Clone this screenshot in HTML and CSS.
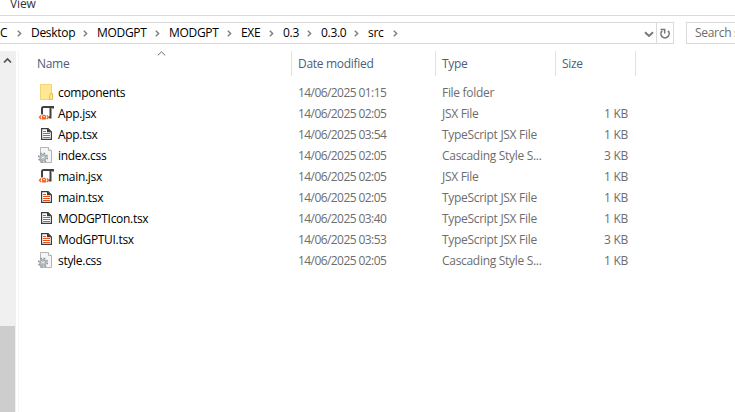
FILE: index.html
```html
<!DOCTYPE html>
<html lang="en">
<head>
<meta charset="utf-8">
<title>src</title>
<link rel="stylesheet" href="styles.css">
</head>
<body>
<svg class="defs" aria-hidden="true">
  <symbol id="chev" viewBox="0 0 5 7"><path d="M.8 .8 3.6 3.5 .8 6.2" fill="none" stroke="#808080" stroke-width="1.5"/></symbol>
  <symbol id="folder" viewBox="0 0 16 16"><path d="M2 0H13.5V9H15V15.5H2Z" fill="#ffe794"/><path d="M2.5 .5H13.5V15.5H2.5Z" fill="#ffe794" stroke="#f2d574"/><path d="M12.5 9.5H14.5V15.5H11.5V13Z" fill="#ffe898" stroke="#e8c04d"/></symbol>
  <symbol id="jsx" viewBox="0 0 16 16"><path d="M4 10V3.5Q4 2 5.5 2H15V3.5" fill="none" stroke="#414141" stroke-width="2"/><path d="M12.5 2V12.5H10.8" fill="none" stroke="#414141" stroke-width="2"/><path d="M0 9.4H10.6V15H0Z" fill="#fff"/><path d="M3.2 10.4 1.5 12.2 3.2 14M8.8 10.4 10.5 12.2 8.8 14" fill="none" stroke="#f26522" stroke-width="1.4"/><path d="M4 11 5 9.8H7L8 11V14.5H4Z" fill="#f26522"/><path d="M5.2 11.6H6.8" stroke="#fff"/></symbol>
  <symbol id="tsx" viewBox="0 0 16 16"><path d="M3.6 2.6H10.1L13.4 5.9V13.4H3.6Z" fill="#fff" stroke="#3c3c3c" stroke-width="1.2"/><path d="M9 2V6.2H13.8Z" fill="#3c3c3c"/><path d="M5 5.5H8M5 7.5H12M5 9.5H12M5 11.5H12" stroke="#e8531c" stroke-width="1"/></symbol>
  <symbol id="css" viewBox="0 0 16 16"><path d="M2.5 .5H10.5L13.5 3.5V15.5H2.5Z" fill="#f5f5f5" stroke="#b5b5b5"/><path d="M10.5 .5V3.5H13.5" fill="#fff" stroke="#b5b5b5"/><circle cx="5" cy="10.5" r="4.3" fill="none" stroke="#8f979b" stroke-width="1.7" stroke-dasharray="1.7 1.68"/><circle cx="5" cy="10.5" r="2.9" fill="#e5e8e9" stroke="#a9b0b3" stroke-width="1.6"/><circle cx="5" cy="10.5" r="1.3" fill="#fff" stroke="#8a9296" stroke-width=".6"/></symbol>
</svg>
<div class="ribbon"><span>View</span></div>
<div class="toolbar">
  <div class="address">
    <div class="crumbs">
      <span class="crumb">C<svg><use href="#chev"/></svg></span>
      <span class="crumb">Desktop<svg><use href="#chev"/></svg></span>
      <span class="crumb">MODGPT<svg><use href="#chev"/></svg></span>
      <span class="crumb">MODGPT<svg><use href="#chev"/></svg></span>
      <span class="crumb">EXE<svg><use href="#chev"/></svg></span>
      <span class="crumb">0.3<svg><use href="#chev"/></svg></span>
      <span class="crumb">0.3.0<svg><use href="#chev"/></svg></span>
      <span class="crumb">src<svg><use href="#chev"/></svg></span>
    </div>
    <svg class="drop" viewBox="0 0 10 7"><path d="M1 1.2 5 5 9 1.2" fill="none" stroke="#777" stroke-width="1.9"/></svg>
    <div class="refresh"><svg viewBox="0 0 12 12"><path d="M3.2 2.8A4.1 4.1 0 1 0 9 2.9" fill="none" stroke="#777" stroke-width="1.6"/><path d="M1.5 1.4H5.7V5.4" fill="none" stroke="#777" stroke-width="1.5"/></svg></div>
  </div>
  <div class="search">Search src</div>
</div>
<div class="main">
  <div class="scroll">
    <svg viewBox="0 0 9 7"><path d="M1 5.5 4.5 2 8 5.5" fill="none" stroke="#505050" stroke-width="1.7"/></svg>
    <div class="thumb"></div>
  </div>
  <div class="list">
    <div class="row head">
      <span class="h-name">Name<svg class="sort" viewBox="0 0 9 5"><path d="M.8 4.4 4.5 .8 8.2 4.4" fill="none" stroke="#666" stroke-width="1"/></svg></span><span>Date modified</span><span>Type</span><span>Size</span>
    </div>
    <div class="row"><span class="name"><svg><use href="#folder"/></svg>components</span><span class="date">14/06/2025 01:15</span><span class="type">File folder</span><span class="size"></span></div>
    <div class="row"><span class="name"><svg><use href="#jsx"/></svg>App.jsx</span><span class="date">14/06/2025 02:05</span><span class="type">JSX File</span><span class="size">1 KB</span></div>
    <div class="row"><span class="name"><svg><use href="#tsx"/></svg>App.tsx</span><span class="date">14/06/2025 03:54</span><span class="type">TypeScript JSX File</span><span class="size">1 KB</span></div>
    <div class="row"><span class="name"><svg><use href="#css"/></svg>index.css</span><span class="date">14/06/2025 02:05</span><span class="type">Cascading Style S...</span><span class="size">3 KB</span></div>
    <div class="row"><span class="name"><svg><use href="#jsx"/></svg>main.jsx</span><span class="date">14/06/2025 02:05</span><span class="type">JSX File</span><span class="size">1 KB</span></div>
    <div class="row"><span class="name"><svg><use href="#tsx"/></svg>main.tsx</span><span class="date">14/06/2025 02:05</span><span class="type">TypeScript JSX File</span><span class="size">1 KB</span></div>
    <div class="row"><span class="name"><svg><use href="#tsx"/></svg>MODGPTIcon.tsx</span><span class="date">14/06/2025 03:40</span><span class="type">TypeScript JSX File</span><span class="size">1 KB</span></div>
    <div class="row"><span class="name"><svg><use href="#tsx"/></svg>ModGPTUI.tsx</span><span class="date">14/06/2025 03:53</span><span class="type">TypeScript JSX File</span><span class="size">3 KB</span></div>
    <div class="row"><span class="name"><svg><use href="#css"/></svg>style.css</span><span class="date">14/06/2025 02:05</span><span class="type">Cascading Style S...</span><span class="size">1 KB</span></div>
  </div>
</div>
</body>
</html>
```
FILE: styles.css
```css
* { box-sizing: border-box; }
body {
  margin: 0;
  width: 735px;
  height: 412px;
  overflow: hidden;
  background: #fff;
  color: #000;
  font: 12px/16px "Open Sans", "Noto Sans", sans-serif;
  letter-spacing: -.3px;
  white-space: nowrap;
  display: flex;
  flex-direction: column;
}
.defs { display: none; }
svg { flex: none; display: block; }
.ribbon {
  height: 16px;
  border-bottom: 1px solid #dadbdc;
  padding-left: 10px;
  color: #333;
  line-height: 15px;
  display: flex;
  align-items: center;
}
.ribbon span { margin-top: -8px; letter-spacing: -.1px; }
.toolbar { display: flex; gap: 12px; padding-top: 6px; }
.address {
  flex: none;
  width: 674px;
  height: 22px;
  border: 1px solid #d9d9d9;
  border-left: 0;
  display: flex;
  align-items: center;
}
.crumbs {
  flex: 1;
  display: grid;
  grid-template-columns: 31px 66px 72px 72px 42px 38px 47px 39px;
}
.crumb { display: flex; align-items: center; justify-content: space-between; padding-right: 9px; }
.crumb svg { width: 5px; height: 7px; margin-top: 1px; }
.drop { width: 10px; height: 7px; margin: 2px 2px 0 0; }
.refresh {
  width: 17px;
  height: 20px;
  border-left: 1px solid #d9d9d9;
  display: flex;
  align-items: center;
  justify-content: center;
}
.refresh svg { width: 12px; height: 12px; margin-top: 1px; }
.search {
  flex: none;
  width: 60px;
  height: 22px;
  border: 1px solid #d9d9d9;
  padding-left: 8px;
  line-height: 20px;
  color: #6d6d6d;
}
.main { flex: 1; display: flex; margin-top: 7px; }
.scroll {
  width: 16px;
  background: #f0f0f0;
  display: flex;
  flex-direction: column;
  justify-content: space-between;
}
.scroll svg { width: 9px; height: 7px; margin: 6px 0 0 3px; }
.thumb { width: 15px; height: 86px; background: #cdcdcd; }
.list { flex: 1; margin-left: 2px; border-left: 1px solid #f4f4f4; }
.row {
  display: grid;
  grid-template-columns: 273px 144px 120px 80px;
  height: 21px;
  padding-top: 3px;
  align-items: start;
  color: #6d6d6d;
}
.head { height: 25px; padding-top: 0; margin-bottom: 6px; color: #4c607a; }
.head span {
  height: 25px;
  line-height: 26px;
  border-right: 1px solid #e2e2e2;
  padding-left: 6px;
}
.head .h-name { padding-left: 18px; position: relative; }
.sort { position: absolute; left: 138px; top: 0; width: 9px; height: 5px; }
.name { display: flex; gap: 4px; padding-left: 19px; color: #000; }
.name svg { width: 16px; height: 16px; margin-top: -1px; }
.date, .type { padding-left: 6px; }
.date { letter-spacing: -.57px; }
.size { text-align: right; padding-right: 8px; }
```
